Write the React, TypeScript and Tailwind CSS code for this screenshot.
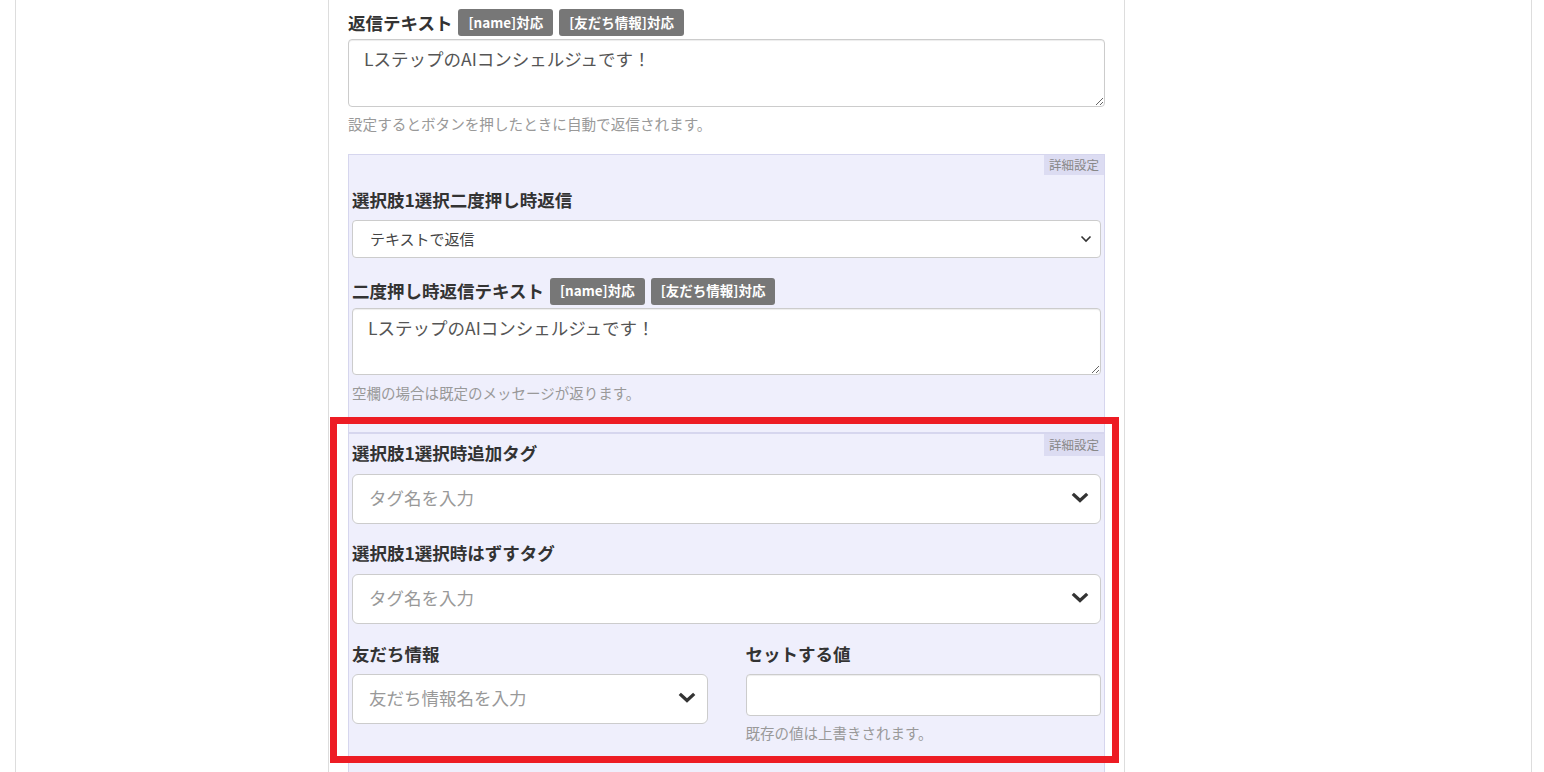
import React from "react";

function Badge({ children }: { children: React.ReactNode }) {
  return (
    <span className="inline-flex h-[27px] items-center rounded-[3px] bg-[#777777] px-[10px] text-[13.5px] font-bold leading-none text-white">
      {children}
    </span>
  );
}

function Detail({ h }: { h: string }) {
  return (
    <div
      className={`absolute right-0 top-0 ${h} flex items-center bg-[#dcdcf2] px-[5px] text-[12.5px] text-[#888888]`}
    >
      詳細設定
    </div>
  );
}

function Label({ children }: { children: React.ReactNode }) {
  return <div className="text-[17.5px] font-bold leading-[24px] text-[#333333]">{children}</div>;
}

function BoldChevron() {
  return (
    <svg width="18" height="12" viewBox="0 0 18 12" className="shrink-0">
      <polyline points="3,3 9,8.5 15,3" fill="none" stroke="#333333" strokeWidth="3.3" strokeLinecap="square" />
    </svg>
  );
}

function TagSelect({ placeholder }: { placeholder: string }) {
  return (
    <div className="mt-[9px] flex h-[50px] items-center justify-between rounded-[6px] border border-[#cccccc] bg-white pb-[2px] pl-[16px] pr-[11px]">
      <span className="text-[17.5px] text-[#999999]">{placeholder}</span>
      <BoldChevron />
    </div>
  );
}

const MSG = "LステップのAIコンシェルジュです！";

function Area({ className }: { className: string }) {
  return (
    <textarea
      readOnly
      defaultValue={MSG}
      className={`block w-full rounded-[4px] border border-[#cccccc] bg-white px-[15px] py-[7px] text-[17.5px] leading-[24px] text-[#555555] shadow-[inset_0_1px_1px_rgba(0,0,0,0.075)] outline-none ${className}`}
    />
  );
}

export default function App() {
  return (
    <div className="relative h-[772px] overflow-hidden bg-white font-['Noto_Sans_CJK_JP','Noto_Sans',sans-serif]">
      <div className="ml-[15px] h-full w-[1517px] border-x border-[#dddddd]">
        <div className="ml-[312px] h-full w-[797px] border-x border-[#dddddd] px-[19px] pt-[9px]">
          <div className="flex h-[27px] items-center gap-[6px]">
            <Label>返信テキスト</Label>
            <Badge>[name]対応</Badge>
            <Badge>[友だち情報]対応</Badge>
          </div>
          <Area className="mt-[3px] h-[68px]" />
          <div className="mt-[6px] text-[14.6px] leading-[21px] text-[#999999]">
            設定するとボタンを押したときに自動で返信されます。
          </div>

          <div className="relative mt-[20px] border border-[#d6d6ee] bg-[#efeffc] px-[3px] pb-[29px] pt-[33px]">
            <Detail h="h-[20px]" />
            <Label>選択肢1選択二度押し時返信</Label>
            <div className="mt-[8px] flex h-[38px] items-center justify-between rounded-[4px] border border-[#cccccc] bg-white pl-[17px] pr-[8px]">
              <span className="text-[15px] text-[#444444]">テキストで返信</span>
              <svg width="12" height="8" viewBox="0 0 12 8">
                <polyline points="1.5,1.5 6,6 10.5,1.5" fill="none" stroke="#333333" strokeWidth="1.6" />
              </svg>
            </div>
            <div className="mt-[20px] flex h-[26px] items-center gap-[6px]">
              <Label>二度押し時返信テキスト</Label>
              <Badge>[name]対応</Badge>
              <Badge>[友だち情報]対応</Badge>
            </div>
            <Area className="mt-[4px] h-[67px]" />
            <div className="mt-[7px] text-[14.5px] leading-[21px] text-[#999999]">
              空欄の場合は既定のメッセージが返ります。
            </div>
          </div>

          <div className="relative border border-[#d6d6ee] bg-[#efeffc] px-[3px] pb-[40px] pt-[7px]">
            <Detail h="h-[22px]" />
            <Label>選択肢1選択時追加タグ</Label>
            <TagSelect placeholder="タグ名を入力" />
            <div className="mt-[17px]">
              <Label>選択肢1選択時はずすタグ</Label>
            </div>
            <TagSelect placeholder="タグ名を入力" />
            <div className="mt-[18px] grid grid-cols-2 gap-x-[38px]">
              <div>
                <Label>友だち情報</Label>
                <div className="mt-[8px] flex h-[50px] items-center justify-between rounded-[6px] border border-[#cccccc] bg-white pb-[2px] pl-[16px] pr-[11px]">
                  <span className="text-[17.5px] text-[#999999]">友だち情報名を入力</span>
                  <BoldChevron />
                </div>
              </div>
              <div>
                <Label>セットする値</Label>
                <div className="mt-[8px] h-[42px] rounded-[4px] border border-[#cccccc] bg-white shadow-[inset_0_1px_1px_rgba(0,0,0,0.075)]" />
                <div className="mt-[6px] text-[14.5px] leading-[21px] text-[#999999]">
                  既存の値は上書きされます。
                </div>
              </div>
            </div>
          </div>
        </div>
      </div>
      <div className="pointer-events-none absolute left-[330px] top-[417px] h-[346px] w-[789px] border-[7px] border-[#ed1c24]" />
    </div>
  );
}
